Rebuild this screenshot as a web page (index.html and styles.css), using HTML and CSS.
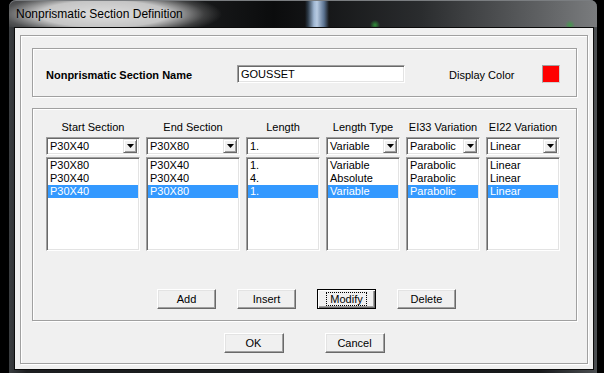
FILE: index.html
```html
<!DOCTYPE html>
<html lang="en">
<head>
    <meta charset="UTF-8">
    <title>Nonprismatic Section Definition</title>
    <link rel="stylesheet" href="styles.css">
</head>
<body>
    <div class="window">
        <div class="titlebar">
            <span class="title">Nonprismatic Section Definition</span>
        </div>

        <div class="client">
            <div class="frame">
                <section class="group name-group">
                    <label class="name-label">Nonprismatic Section Name</label>
                    <div class="field name-field">GOUSSET</div>
                    <span class="color-label">Display Color</span>
                    <span class="swatch"></span>
                </section>

                <section class="group table-group">
                    <div class="columns">
                        <div class="col col-wide">
                            <div class="col-head">Start Section</div>
                            <div class="field combo">
                                <span>P30X40</span>
                                <span class="drop"><svg width="7" height="4" viewBox="0 0 7 4"><path d="M0 0h7L3.5 4z" fill="#000"/></svg></span>
                            </div>
                            <ul class="list">
                                <li>P30X80</li>
                                <li>P30X40</li>
                                <li class="selected">P30X40</li>
                            </ul>
                        </div>

                        <div class="col col-wide">
                            <div class="col-head">End Section</div>
                            <div class="field combo">
                                <span>P30X80</span>
                                <span class="drop"><svg width="7" height="4" viewBox="0 0 7 4"><path d="M0 0h7L3.5 4z" fill="#000"/></svg></span>
                            </div>
                            <ul class="list">
                                <li>P30X40</li>
                                <li>P30X40</li>
                                <li class="selected">P30X80</li>
                            </ul>
                        </div>

                        <div class="col">
                            <div class="col-head">Length</div>
                            <div class="field combo">
                                <span>1.</span>
                            </div>
                            <ul class="list">
                                <li>1.</li>
                                <li>4.</li>
                                <li class="selected">1.</li>
                            </ul>
                        </div>

                        <div class="col">
                            <div class="col-head">Length Type</div>
                            <div class="field combo">
                                <span>Variable</span>
                                <span class="drop"><svg width="7" height="4" viewBox="0 0 7 4"><path d="M0 0h7L3.5 4z" fill="#000"/></svg></span>
                            </div>
                            <ul class="list">
                                <li>Variable</li>
                                <li>Absolute</li>
                                <li class="selected">Variable</li>
                            </ul>
                        </div>

                        <div class="col">
                            <div class="col-head">EI33 Variation</div>
                            <div class="field combo">
                                <span>Parabolic</span>
                                <span class="drop"><svg width="7" height="4" viewBox="0 0 7 4"><path d="M0 0h7L3.5 4z" fill="#000"/></svg></span>
                            </div>
                            <ul class="list">
                                <li>Parabolic</li>
                                <li>Parabolic</li>
                                <li class="selected">Parabolic</li>
                            </ul>
                        </div>

                        <div class="col">
                            <div class="col-head">EI22 Variation</div>
                            <div class="field combo">
                                <span>Linear</span>
                                <span class="drop"><svg width="7" height="4" viewBox="0 0 7 4"><path d="M0 0h7L3.5 4z" fill="#000"/></svg></span>
                            </div>
                            <ul class="list">
                                <li>Linear</li>
                                <li>Linear</li>
                                <li class="selected">Linear</li>
                            </ul>
                        </div>
                    </div>

                    <div class="actions">
                        <button class="btn">Add</button>
                        <button class="btn">Insert</button>
                        <button class="btn btn-focus"><span>Modify</span></button>
                        <button class="btn">Delete</button>
                    </div>
                </section>

                <div class="dialog-buttons">
                    <button class="btn">OK</button>
                    <button class="btn">Cancel</button>
                </div>
            </div>
        </div>
    </div>
</body>
</html>
```

FILE: styles.css
```css
:root {
    --face: #f0f0f0;
    --shadow: #a0a0a0;
    --dark-shadow: #696969;
    --light: #e3e3e3;
    --highlight: #3399ff;
}

* {
    margin: 0;
    padding: 0;
    box-sizing: border-box;
}

body {
    width: 604px;
    height: 373px;
    overflow: hidden;
    background: #000;
    font-family: "Liberation Sans", Arial, sans-serif;
    font-size: 11px;
    color: #000;
}

.window {
    margin-left: 9px;
    width: 588px;
    height: 373px;
    padding: 0 3px 3px 5px;
    border-radius: 7px 7px 0 0;
    background: linear-gradient(to right, #3a3d40, #1c1e20 3%, #16181a 90%, #4c4f52);
    box-shadow: inset 0 1px 0 #6a6d70;
}

/* title bar, aero glass look */
.titlebar {
    height: 27px;
    margin: 0 -3px 0 -5px;
    padding-left: 7px;
    display: flex;
    align-items: center;
    border-radius: 7px 7px 0 0;
    background:
        radial-gradient(ellipse 118px 24px at 95px 14px, rgba(222, 222, 222, 1), rgba(205, 205, 205, 0.95) 55%, rgba(120, 120, 120, 0.4) 85%, rgba(60, 60, 60, 0) 100%),
        radial-gradient(circle 5px at 366px 25px, rgba(50, 170, 60, 0.8), rgba(50, 170, 60, 0)),
        radial-gradient(circle 5px at 561px 25px, rgba(50, 170, 60, 0.7), rgba(50, 170, 60, 0)),
        linear-gradient(to right, rgba(0, 0, 0, 0) 296px, #2c3a48 299px, #9fb6d2 305px, #b8cbe2 308px, #5a7290 315px, rgba(0, 0, 0, 0) 320px),
        linear-gradient(to right, #3a3c3e 0, #0b0c0d 45%, #2a2c2e 70%, #5e6062 90%, #7a7c7e 100%);
    box-shadow: inset 0 1px 0 #7a7d80;
}

.title {
    font-size: 12px;
    color: #000;
}

.client {
    height: 343px;
    padding: 7px 5px 5px 5px;
    background: var(--face);
    border: 1px solid #0c0c0c;
}

.frame {
    height: 329px;
    padding: 12px 11px 0 11px;
    border: 1px solid var(--shadow);
    box-shadow: 1px 1px 0 #fff, inset 1px 1px 0 #fff;
}

.group {
    width: 545px;
    border: 1px solid var(--shadow);
    box-shadow: 1px 1px 0 #fff, inset 1px 1px 0 #fff;
}

.name-group {
    height: 49px;
    padding: 16px 0 0 13px;
    display: flex;
    align-items: flex-start;
}

.name-label {
    width: 191px;
    line-height: 18px;
    font-weight: bold;
    padding-top: 1px;
}

/* sunken edit box */
.field {
    height: 18px;
    background: #fff;
    border: 1px solid;
    border-color: var(--shadow) #fff #fff var(--shadow);
    box-shadow: inset 1px 1px 0 var(--dark-shadow), inset -1px -1px 0 var(--light);
    padding: 0 3px;
    line-height: 16px;
    white-space: nowrap;
}

.name-field {
    width: 168px;
}

.color-label {
    margin-left: 44px;
    line-height: 18px;
    padding-top: 1px;
}

.swatch {
    width: 18px;
    height: 18px;
    margin-left: 28px;
    background: #ff0000;
    border: 1px solid;
    border-color: var(--shadow) #d0d0d0 #d0d0d0 var(--shadow);
}

.table-group {
    height: 213px;
    margin-top: 11px;
    padding: 11px 0 0 13px;
}

.columns {
    display: flex;
    gap: 6px;
}

.col {
    width: 74px;
}

.col-wide {
    width: 94px;
}

.col-head {
    height: 14px;
    line-height: 14px;
    text-align: center;
    white-space: nowrap;
}

.combo {
    margin-top: 3px;
    display: flex;
    align-items: center;
    justify-content: space-between;
    padding: 0 2px 0 3px;
}

.drop {
    width: 14px;
    height: 14px;
    display: flex;
    align-items: center;
    justify-content: center;
    background: var(--face);
    border: 1px solid;
    border-color: var(--light) var(--dark-shadow) var(--dark-shadow) var(--light);
    box-shadow: inset 1px 1px 0 #fff, inset -1px -1px 0 var(--shadow);
}

.list {
    list-style: none;
    height: 94px;
    margin-top: 2px;
    padding: 1px 0 0 1px;
    background: #fff;
    border: 1px solid;
    border-color: var(--shadow) #fff #fff var(--shadow);
    box-shadow: inset 1px 1px 0 var(--dark-shadow), inset -1px -1px 0 var(--light);
}

.list li {
    height: 13px;
    line-height: 13px;
    padding-left: 2px;
    margin-right: 1px;
    white-space: nowrap;
}

.list li.selected {
    background: var(--highlight);
    color: #fff;
}

/* raised push button */
.btn {
    width: 59px;
    height: 20px;
    font-family: "Liberation Sans", Arial, sans-serif;
    font-size: 11px;
    color: #000;
    background: var(--face);
    border: 1px solid;
    border-color: #fff var(--dark-shadow) var(--dark-shadow) #fff;
    box-shadow: inset -1px -1px 0 var(--shadow), inset 1px 1px 0 var(--light);
}

.btn-focus {
    border: 1px solid #000;
    box-shadow: inset 1px 1px 0 #fff, inset -1px -1px 0 var(--dark-shadow), inset -2px -2px 0 var(--shadow);
}

.btn-focus span {
    display: inline-block;
    padding: 0 3px;
    line-height: 12px;
    outline: 1px dotted #000;
}

.actions {
    margin-top: 38px;
    margin-left: 111px;
    display: flex;
    gap: 21px;
}

.dialog-buttons {
    margin-top: 12px;
    margin-left: -11px;
    margin-right: -11px;
    display: flex;
    justify-content: center;
    gap: 41px;
}

.dialog-buttons .btn {
    width: 60px;
}
```
